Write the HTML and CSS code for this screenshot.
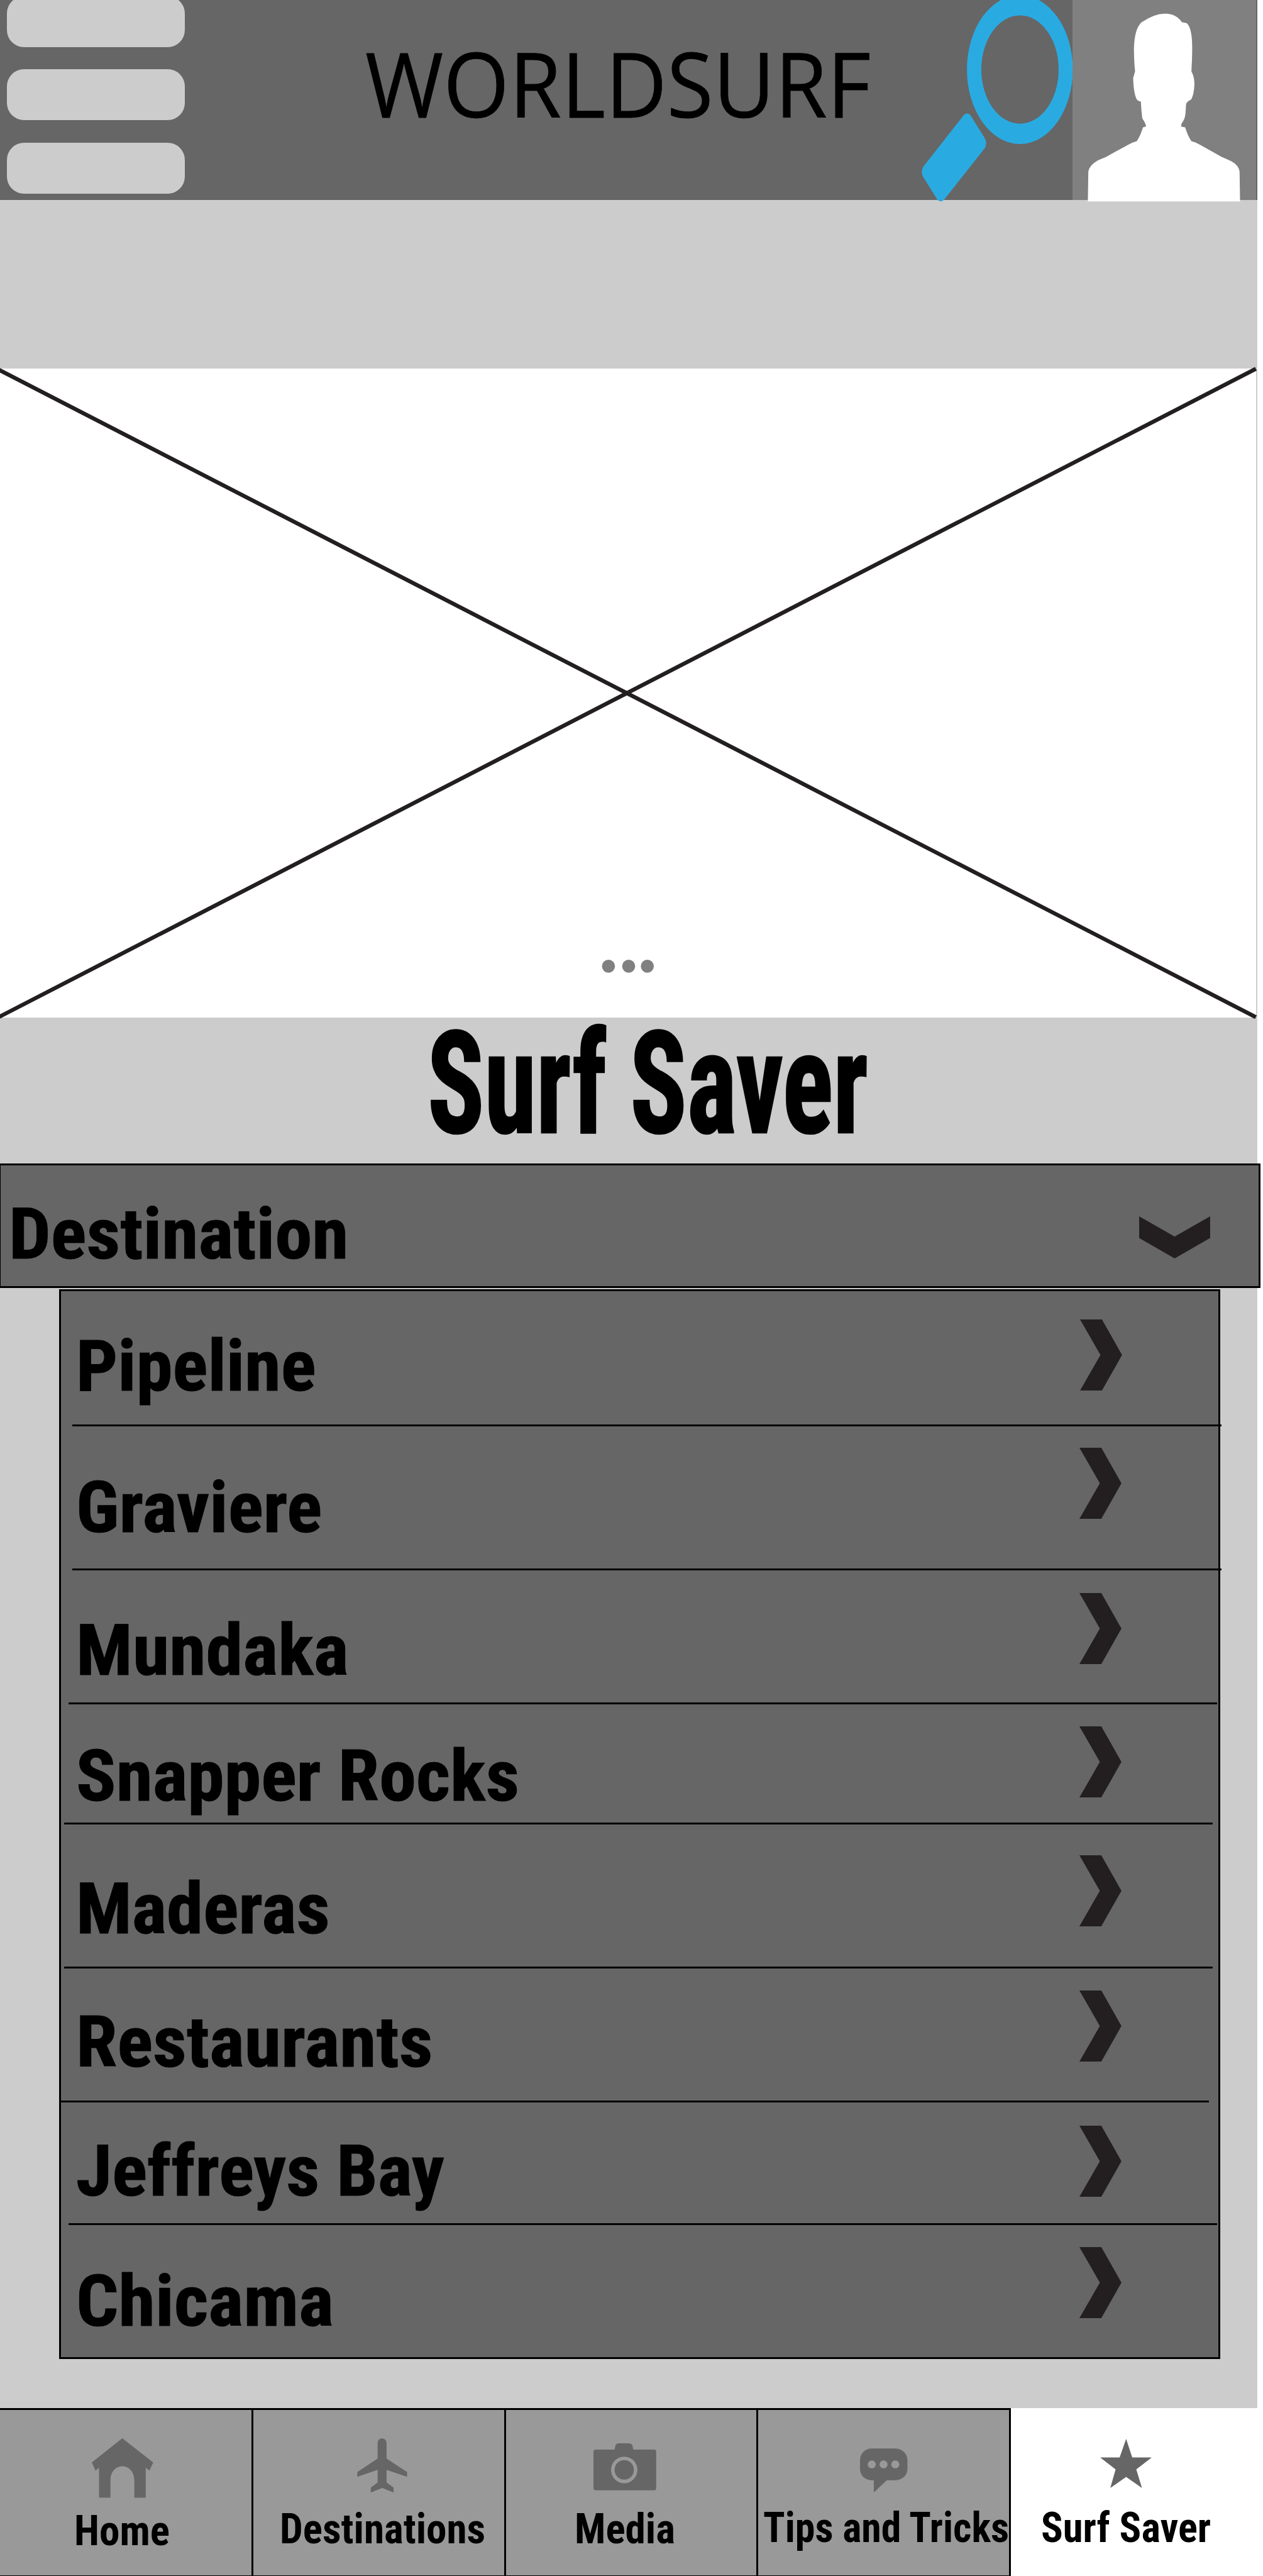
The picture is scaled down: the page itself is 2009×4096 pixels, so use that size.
FILE: index.html
```html
<!DOCTYPE html>
<html lang="en">
<head>
<meta charset="utf-8">
<title>Worldsurf</title>
<link rel="stylesheet" href="styles.css">
</head>
<body>
<header class="topbar">
  <div class="menu"><i class="bar"></i><i class="bar"></i><i class="bar"></i></div>
  <div class="brand"><span class="brand-text">WORLDSURF</span></div>
  <svg class="search" viewBox="1550 0 263 342" fill="#29abe2">
    <path fill-rule="evenodd" d="M1634 117.5a89.5 125.8 0 1 0 179 0a89.5 125.8 0 1 0 -179 0zM1658.3 117.5a65.4 91.5 0 1 0 130.8 0a65.4 91.5 0 1 0 -130.8 0z"/>
    <path d="M1628.800 194.500Q1633.700 189.500 1639.500 194L1664.500 234Q1668.500 241.500 1664.500 250L1595 338Q1590 342.500 1584.500 338L1559.500 298Q1555.500 290.500 1560.500 281.500Z"/>
  </svg>
  <div class="avatar">
    <svg viewBox="773 0 765 1021" preserveAspectRatio="none" fill="#fff">
      <path d="M837 1021L839 870Q842 838 880 812L912 796L1005 734Q1025 721 1041 716Q1056 690 1067 646L1080 641Q1078 624 1064 600Q1060 560 1058 515Q1048 513 1043 507Q1028 480 1026 395L1034 362C1026 260 1025 150 1062 112Q1115 69 1158 69C1200 69 1217 92 1230 113Q1245 114 1251 119C1275 150 1275 230 1269 362Q1289 405 1277 475Q1272 498 1267 505Q1250 514 1247 528C1244 560 1247 590 1235 614Q1226 627 1226 642L1243 646Q1254 690 1269 716Q1285 720 1304 733L1394 795L1435 817Q1467 838 1470 870L1472 1021Z"/>
    </svg>
  </div>
</header>

<main class="page">
  <section class="hero">
    <svg viewBox="0 0 2123 1097" preserveAspectRatio="none">
      <path d="M-6 0L2123 1096M-6 1098L2123 0.300" stroke="#231f20" stroke-width="6.800" fill="none"/>
      <g fill="#808080"><circle cx="1028.600" cy="1010" r="11"/><circle cx="1062.700" cy="1010" r="11"/><circle cx="1094.300" cy="1010" r="11"/></g>
    </svg>
  </section>

  <h1 class="title"><span class="title-text">Surf Saver</span></h1>

  <div class="dropdown">
    <span class="label">Destination</span>
    <svg class="chevron-down" viewBox="0 0 120 71.300"><path d="M0 0L60 34.400L120 0V36.800L60 71.300L0 36.800Z"/></svg>
  </div>

  <ul class="list">
    <li class="row row-1"><span class="label">Pipeline</span><svg class="chevron" viewBox="0 0 71 120"><path d="M0 0H37L71 60L37 120H0L34.500 60Z"/></svg></li>
    <li class="row row-2"><span class="label">Graviere</span><svg class="chevron" viewBox="0 0 71 120"><path d="M0 0H37L71 60L37 120H0L34.500 60Z"/></svg></li>
    <li class="row row-3"><span class="label">Mundaka</span><svg class="chevron" viewBox="0 0 71 120"><path d="M0 0H37L71 60L37 120H0L34.500 60Z"/></svg></li>
    <li class="row row-4"><span class="label">Snapper Rocks</span><svg class="chevron" viewBox="0 0 71 120"><path d="M0 0H37L71 60L37 120H0L34.500 60Z"/></svg></li>
    <li class="row row-5"><span class="label">Maderas</span><svg class="chevron" viewBox="0 0 71 120"><path d="M0 0H37L71 60L37 120H0L34.500 60Z"/></svg></li>
    <li class="row row-6"><span class="label">Restaurants</span><svg class="chevron" viewBox="0 0 71 120"><path d="M0 0H37L71 60L37 120H0L34.500 60Z"/></svg></li>
    <li class="row row-7"><span class="label">Jeffreys Bay</span><svg class="chevron" viewBox="0 0 71 120"><path d="M0 0H37L71 60L37 120H0L34.500 60Z"/></svg></li>
    <li class="row row-8"><span class="label">Chicama</span><svg class="chevron" viewBox="0 0 71 120"><path d="M0 0H37L71 60L37 120H0L34.500 60Z"/></svg></li>
  </ul>
</main>

<nav class="tabs">
  <a class="tab tab-home">
    <svg class="icon" viewBox="221 512 148 302" preserveAspectRatio="none"><path d="M294.500 512L369 635L360 676L351 661V813H323.500V725C323.500 680 309 654 295 654C280 654 266 680 266 725V813H238.500V661L230 676L221 635Z"/></svg>
    <span class="tab-text">Home</span>
  </a>
  <a class="tab tab-destinations">
    <svg class="icon" viewBox="861 512 121 276" preserveAspectRatio="none"><path d="M910.500 536C911 505 931 505 932 536V615L981.500 683V707L932 672V736L949 762V787L921.500 764L894 787V762L910.500 736V672L861.500 707V683L910.500 615Z"/></svg>
    <span class="tab-text">Destinations</span>
  </a>
  <a class="tab tab-media">
    <svg class="icon" viewBox="0 0 108 80" preserveAspectRatio="none"><path fill-rule="evenodd" d="M4 10.500H36L37.500 4Q38.500 0 44 0H60Q65.500 0 66.500 4L68 10.500H104Q107 10.500 107 14V75.500Q107 79.500 104 79.500H4Q0 79.500 0 75.500V14Q0 10.500 4 10.500ZM30 45a22.500 22.500 0 1 0 45 0a22.500 22.500 0 1 0 -45 0z"/><circle cx="52.500" cy="45" r="16.500"/></svg>
    <span class="tab-text">Media</span>
  </a>
  <a class="tab tab-tips">
    <svg class="icon" viewBox="575 563 117 224" preserveAspectRatio="none"><path fill-rule="evenodd" d="M603 564H663C680 566 692 590 692 625V665C692 700 680 722 663 725H641L609 787V725H603C586 722 575 700 575 665V625C575 590 586 566 603 564ZM594 644.500a10 20 0 1 0 20 0a10 20 0 1 0 -20 0zM623 644.500a10 20 0 1 0 20 0a10 20 0 1 0 -20 0zM652 644.500a10 20 0 1 0 20 0a10 20 0 1 0 -20 0z"/></svg>
    <span class="tab-text">Tips and Tricks</span>
  </a>
  <a class="tab tab-saver">
    <svg class="icon" viewBox="1167 515 127 249" preserveAspectRatio="none"><path d="M1231 515L1246 609H1294L1256 670L1270 764L1231 708L1192 764L1205 670L1167 609H1215Z"/></svg>
    <span class="tab-text">Surf Saver</span>
  </a>
</nav>
</body>
</html>
```
FILE: styles.css
```css
/* 1rem = 100 design units */
html { font-size: 94.097px; background: #fff; }
* { box-sizing: border-box; }
body {
  margin: 0;
  width: 21.35rem;
  height: 43.53rem;
  overflow: hidden;
  color: #000;
  font-family: "Roboto Condensed", Roboto, "Liberation Sans", sans-serif;
  font-stretch: 75%;
  font-weight: 700;
}
svg { display: block; overflow: visible; }

.topbar { display: flex; width: 21.25rem; height: 3.38rem; background: #666; }
.menu { flex: none; width: 3.01rem; margin: -.066rem 0 0 .112rem; display: flex; flex-direction: column; gap: .375rem; }
.bar { flex: none; height: .863rem; border-radius: .29rem; background: #ccc; }
.brand { flex: none; width: 12.38rem; padding: .645rem 0 0 3.05rem; }
.brand-text {
  display: inline-block;
  font: 400 1.51rem/1.51rem "Open Sans", "Noto Sans", sans-serif;
  -webkit-text-stroke: .008rem #000;
  white-space: nowrap;
  transform-origin: 0 0;
  transform: scaleX(.947);
}
.search { flex: none; width: 2.63rem; height: 3.42rem; position: relative; z-index: 1; }
.avatar { flex: none; width: 3.1rem; height: 3.38rem; background: #808080; position: relative; z-index: 1; }
.avatar svg { width: 3.1rem; height: 3.403rem; }

.page { width: 21.25rem; height: 37.31rem; padding-top: 2.85rem; background: #ccc; }
.hero { width: 21.23rem; height: 10.97rem; background: #fff; }
.hero svg { width: 100%; height: 100%; }
.title {
  display: flex;
  align-items: flex-start;
  height: 2.46rem;
  margin: 0;
  padding-left: 7.23rem;
  font-size: 2.41rem;
  line-height: 1em;
}
.title-text {
  margin-top: -.083rem;
  white-space: nowrap;
  word-spacing: -.01em;
  -webkit-text-stroke: .012em #000;
  transform-origin: 0 0;
  transform: scaleX(.74);
}

.dropdown {
  display: flex;
  justify-content: space-between;
  width: 21.313rem;
  height: 2.104rem;
  border: .032rem solid #000;
  border-left-width: .018rem;
  padding: .57rem .82rem 0 .14rem;
  background: #666;
}
.label {
  --stretch: 1.048;
  justify-self: start;
  font-size: 1.2rem;
  line-height: 1em;
  white-space: nowrap;
  -webkit-text-stroke: .008em #000;
  transform-origin: 0 0;
  transform: scaleX(var(--stretch));
}
.chevron-down { width: 1.2rem; height: .713rem; margin-top: .295rem; fill: #231f20; }

.list {
  display: flex;
  flex-direction: column;
  list-style: none;
  width: 19.628rem;
  height: 18.079rem;
  margin: .02rem 0 0 .995rem;
  padding: 0;
  border: .033rem solid #000;
  background: #666;
}
.row {
  display: grid;
  grid-template: "label chevron" 1fr "rule rule" .032rem / 16.937rem 1fr;
  padding-left: .28rem;
  flex: none;
}
.row .label { margin-left: -.018rem; }
.row .chevron { width: .71rem; height: 1.2rem; fill: #231f20; }
.row::after { content: ""; grid-area: rule; background: #000; }
.row-1 { height: 2.288rem; }
.row-1 .label { --stretch: 1.034; margin-top: .683rem; }
.row-1 .chevron { margin: .481rem 0 0 .01rem; }
.row-1::after, .row-2::after { width: 19.419rem; margin-left: -.082rem; }
.row-2 { height: 2.433rem; }
.row-2 .label { --stretch: 1.036; margin-top: .79rem; }
.row-2 .chevron { margin-top: .36rem; }
.row-3 { height: 2.265rem; }
.row-3 .label { --stretch: 1.05; margin-top: .765rem; }
.row-3 .chevron { margin-top: .383rem; }
.row-3::after, .row-7::after { width: 19.42rem; margin-left: -.153rem; }
.row-4 { height: 2.032rem; }
.row-4 .label { --stretch: 1.045; margin-top: .625rem; }
.row-4 .chevron { margin-top: .368rem; }
.row-4::after, .row-5::after { width: 19.417rem; margin-left: -.22rem; }
.row-5 { height: 2.433rem; }
.row-5 .label { --stretch: 1.038; margin-top: .832rem; }
.row-5 .chevron { margin-top: .522rem; }
.row-6 { height: 2.263rem; }
.row-6 .label { margin-top: .652rem; }
.row-6 .chevron { margin-top: .366rem; }
.row-6::after { width: 19.407rem; margin-left: -.28rem; }
.row-7 { height: 2.072rem; }
.row-7 .label { --stretch: 1.034; margin-top: .572rem; }
.row-7 .chevron { margin-top: .389rem; }
.row-8 { height: 2.23rem; }
.row-8 .label { --stretch: 1.05; margin-top: .7rem; }
.row-8 .chevron { margin-top: .37rem; }
.row-8::after { display: none; }

.tabs { display: flex; height: 2.84rem; background: #fff; }
.tab {
  display: flex;
  flex-direction: column;
  align-items: flex-start;
  flex: none;
  width: 4.27rem;
  height: 2.84rem;
  background: #999;
  border: solid #000;
  border-width: .037rem .035rem .02rem 0;
}
.icon { flex: none; fill: #666; }
.tab-text {
  font-size: .703rem;
  line-height: 1em;
  white-space: nowrap;
  transform-origin: 0 0;
  transform: scaleX(.985);
}
.tab-home { width: 4.28rem; }
.tab-home .icon { width: 1.038rem; height: 1.007rem; margin: .48rem 0 0 1.55rem; }
.tab-home .tab-text { margin: .215rem 0 0 1.255rem; }
.tab-destinations .icon { width: .849rem; height: .92rem; margin: .48rem 0 0 1.76rem; }
.tab-destinations .tab-text { margin: .274rem 0 0 .45rem; }
.tab-media .icon { width: 1.07rem; height: .8rem; margin: .57rem 0 0 1.485rem; }
.tab-media .tab-text { margin: .304rem 0 0 1.16rem; }
.tab-tips .icon { width: .802rem; height: .747rem; margin: .65rem 0 0 1.715rem; }
.tab-tips .tab-text { margin: .25rem 0 0 .08rem; transform: scaleX(.966); }
.tab-saver { background: #fff; border-color: transparent; }
.tab-saver .icon { width: .871rem; height: .83rem; margin: .49rem 0 0 1.51rem; }
.tab-saver .tab-text { margin: .327rem 0 0 .51rem; transform: scaleX(.976); }
```
